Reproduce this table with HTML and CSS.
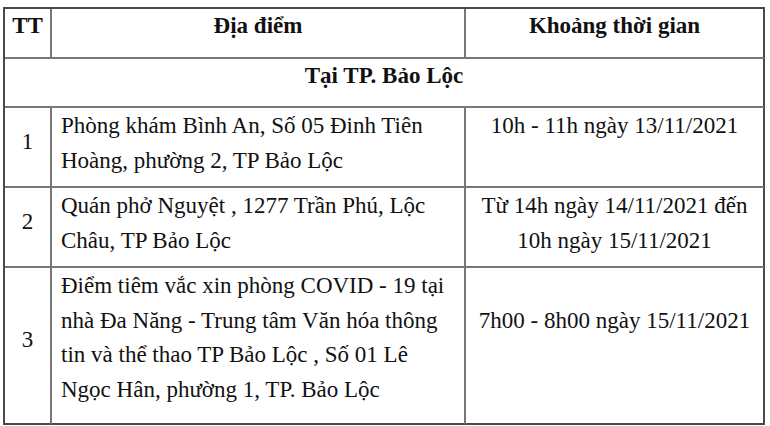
FILE: index.html
```html
<!DOCTYPE html>
<html lang="vi">
<head>
<meta charset="utf-8">
<title>Địa điểm</title>
<link rel="stylesheet" href="styles.css">
</head>
<body>
<div class="page">
  <table class="schedule">
    <colgroup>
      <col class="col-tt">
      <col class="col-place">
      <col class="col-time">
    </colgroup>
    <thead>
      <tr class="row-head">
        <th class="tt">TT</th>
        <th>Địa điểm</th>
        <th class="last">Khoảng thời gian</th>
      </tr>
    </thead>
    <tbody>
      <tr class="row-group">
        <th colspan="3" class="last">Tại TP. Bảo Lộc</th>
      </tr>
      <tr class="row-2l">
        <td class="tt">1</td>
        <td class="place">Phòng khám Bình An, Số 05 Đinh Tiên<br>Hoàng, phường 2, TP Bảo Lộc</td>
        <td class="time last">10h - 11h ngày 13/11/2021</td>
      </tr>
      <tr class="row-2l">
        <td class="tt">2</td>
        <td class="place">Quán phở Nguyệt , 1277 Trần Phú, Lộc<br>Châu, TP Bảo Lộc</td>
        <td class="time last">Từ 14h ngày 14/11/2021 đến<br>10h ngày 15/11/2021</td>
      </tr>
      <tr class="row-4l bottom">
        <td class="tt">3</td>
        <td class="place">Điểm tiêm vắc xin phòng COVID - 19 tại<br>nhà Đa Năng - Trung tâm Văn hóa thông<br>tin và thể thao TP Bảo Lộc , Số 01 Lê<br>Ngọc Hân, phường 1, TP. Bảo Lộc</td>
        <td class="time last offset">7h00 - 8h00 ngày 15/11/2021</td>
      </tr>
    </tbody>
  </table>
</div>
</body>
</html>
```

FILE: styles.css
```css
html, body {
  margin: 0;
  padding: 0;
  background: #ffffff;
}

body {
  font-family: "Liberation Serif", "Times New Roman", serif;
  color: #111111;
}

.page {
  padding: 7px 0 0 3px;
}

.schedule {
  border-collapse: separate;
  border-spacing: 0;
  table-layout: fixed;
  width: 762px;
  border-top: 2px solid #4a4a4a;
  border-left: 2px solid #4a4a4a;
  font-size: 23px;
  line-height: 34.5px;
}

.col-tt { width: 47px; }
.col-place { width: 414px; }
.col-time { width: 299px; }

.schedule th,
.schedule td {
  box-sizing: border-box;
  padding: 0;
  border-right: 2px solid #777777;
  border-bottom: 2px solid #777777;
  vertical-align: top;
  white-space: nowrap;
}

.schedule th {
  font-weight: bold;
  text-align: center;
}

.schedule .last {
  border-right-color: #4a4a4a;
}

.schedule .bottom td {
  border-bottom-color: #4a4a4a;
}

.row-head { height: 50px; }
.row-group { height: 49px; }
.row-2l { height: 80px; }
.row-4l { height: 157px; }

.schedule td.tt {
  text-align: center;
  vertical-align: middle;
  padding-bottom: 10px;
}

.schedule td.place {
  padding: 1px 0 0 9px;
  text-align: left;
}

.schedule td.time {
  padding-top: 1px;
  text-align: center;
}

.schedule td.offset {
  padding-top: 36px;
}
```
